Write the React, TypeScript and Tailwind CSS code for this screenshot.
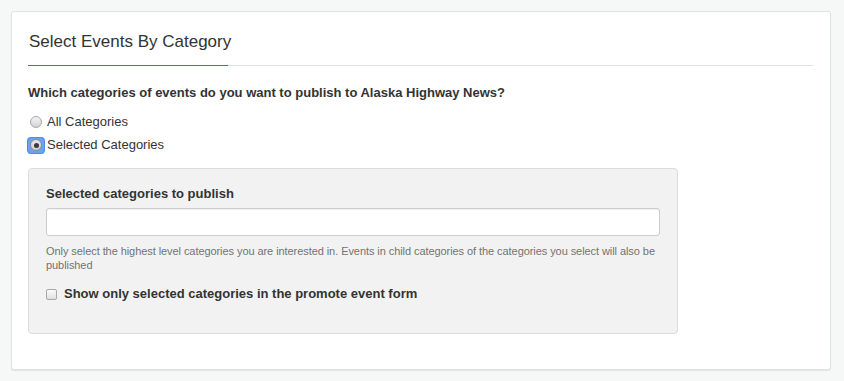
import React from 'react';

const font = { fontFamily: '"Liberation Sans", Arial, sans-serif' };

function Radio({ checked }: { checked?: boolean }) {
  if (checked) {
    return (
      <span className="flex h-[15px] w-[16px] items-center justify-center rounded-[3px] bg-[#6aa2f2] shadow-[0_0_0_1px_#4d8be8]">
        <span className="flex h-[12px] w-[12px] items-center justify-center rounded-full border border-[#8c8c8c] bg-gradient-to-b from-[#e6e6e6] to-[#cfcfcf]">
          <span className="h-[5px] w-[5px] rounded-full bg-[#3a3a3a]" />
        </span>
      </span>
    );
  }
  return (
    <span className="flex h-[15px] w-[16px] items-center justify-center">
      <span className="h-[12px] w-[12px] rounded-full border border-[#a8a8a8] bg-gradient-to-b from-[#f4f4f4] to-[#d4d4d4]" />
    </span>
  );
}

export default function App() {
  return (
    <div className="min-h-screen bg-[#f6f7f7] p-[11px] text-[#333]" style={font}>
      <div className="h-[359px] w-[820px] rounded-[3px] border border-[#dde3e3] bg-white pt-[18px] pr-[17px] pl-[16px] shadow-[0_1px_1px_rgba(0,0,0,0.08)]">
        <div className="flex border-b border-[#e0e0e0]">
          <h2 className="-mb-px w-[200px] border-b border-[#d63a4c] pb-[11px] pl-px text-[17px] leading-[24px] font-normal whitespace-nowrap text-[#333]">
            Select Events By Category
          </h2>
        </div>

        <p className="mt-[18px] text-[13px] leading-[18px] font-bold">
          Which categories of events do you want to publish to Alaska Highway News?
        </p>

        <div className="mt-[10px] flex flex-col gap-[3px]">
          <label className="flex h-[20px] items-center gap-[3px] text-[13px]">
            <Radio />
            <span>All Categories</span>
          </label>
          <label className="flex h-[20px] items-center gap-[3px] text-[13px]">
            <Radio checked />
            <span>Selected Categories</span>
          </label>
        </div>

        <div className="mt-[13px] w-[650px] rounded-[4px] border border-[#dcdcdc] bg-[#f2f2f2] px-[17px] pt-[16px] pb-[30px]">
          <p className="text-[13px] leading-[18px] font-bold">Selected categories to publish</p>
          <div className="mt-[5px] h-[28px] w-full rounded-[3px] border border-[#cccccc] bg-white shadow-[inset_0_1px_1px_rgba(0,0,0,0.06)]" />
          <p className="mt-[8px] text-[11px] leading-[14px] tracking-[-0.07px] text-[#737373]">
            Only select the highest level categories you are interested in. Events in child categories of the categories you select will also be published
          </p>
          <label className="mt-[13px] flex h-[18px] items-center gap-[7px] text-[13px] font-bold">
            <span className="h-[11px] w-[11px] rounded-[2px] border border-[#a8a8a8] bg-gradient-to-b from-[#fafafa] to-[#e0e0e0]" />
            <span>Show only selected categories in the promote event form</span>
          </label>
        </div>
      </div>
    </div>
  );
}
